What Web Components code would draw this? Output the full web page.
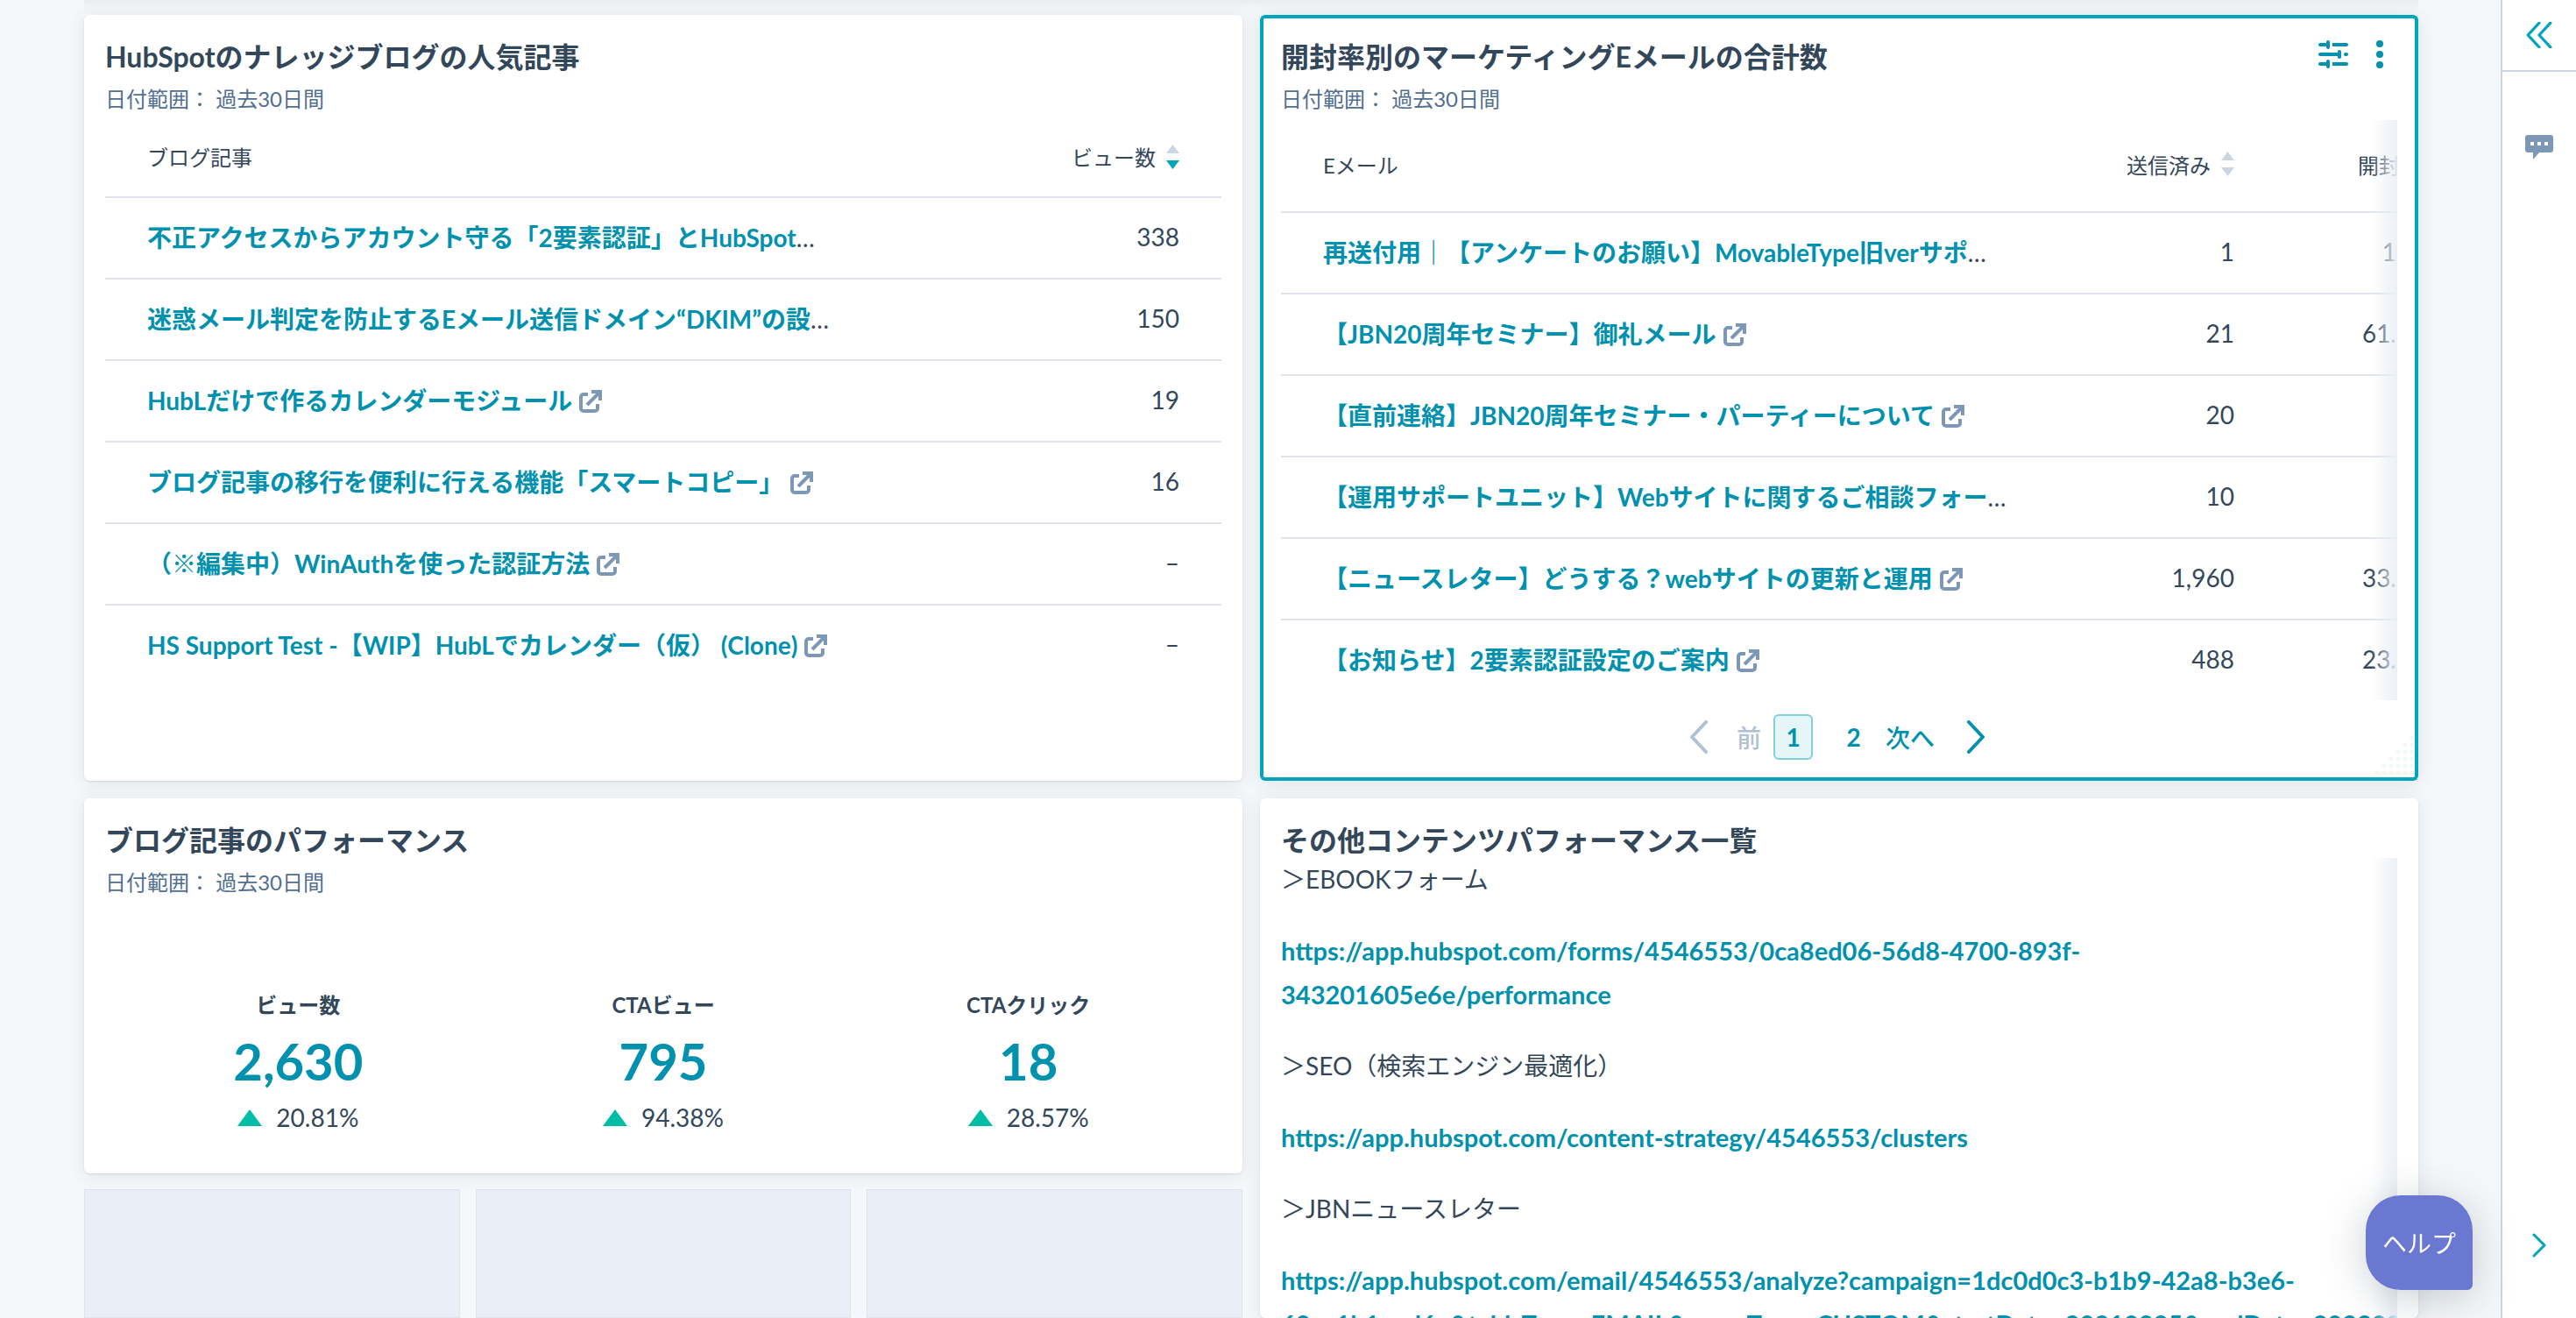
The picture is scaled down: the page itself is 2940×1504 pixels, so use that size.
<!DOCTYPE html>
<html lang="ja">
<head>
<meta charset="utf-8">
<title>ダッシュボード</title>
<style>
    html, body {
        height: 100%;
    }
    body {
        margin: 0;
        display: flex;
        overflow: hidden;
        background: #f5f8fa;
        color: #33475b;
        font-family: Lato, "Noto Sans CJK JP", sans-serif;
        font-size: 28px;
        text-spacing-trim: space-all;
    }
    report-board {
        flex: 1;
        min-width: 0;
    }
    .stack {
        display: flex;
        flex-direction: column;
        gap: 18px;
        min-width: 0;
    }
    .tiles {
        flex: 1;
        display: flex;
        gap: 18px;
    }
    .metrics {
        display: flex;
        margin: 108px 12px 24px;
    }
</style>
</head>
<body>
<report-board>
    <report-card heading="HubSpotのナレッジブログの人気記事" range="過去30日間">
        <report-table source="posts"></report-table>
    </report-card>
    <report-card heading="開封率別のマーケティングEメールの合計数" range="過去30日間" selected>
        <card-actions slot="actions"></card-actions>
        <fade-scroll><report-table source="emails" wide></report-table></fade-scroll>
        <page-nav></page-nav>
    </report-card>
    <div class="stack">
        <report-card heading="ブログ記事のパフォーマンス" range="過去30日間">
            <div class="metrics">
                <kpi-metric label="ビュー数" value="2,630" delta="20.81%"></kpi-metric>
                <kpi-metric label="CTAビュー" value="795" delta="94.38%"></kpi-metric>
                <kpi-metric label="CTAクリック" value="18" delta="28.57%"></kpi-metric>
            </div>
        </report-card>
        <div class="tiles">
            <empty-tile></empty-tile>
            <empty-tile></empty-tile>
            <empty-tile></empty-tile>
        </div>
    </div>
    <report-card heading="その他コンテンツパフォーマンス一覧">
        <fade-scroll><link-notes></link-notes></fade-scroll>
    </report-card>
</report-board>
<side-rail></side-rail>
<help-button>ヘルプ</help-button>

<script>
const tables = {
    posts: {
        columns: [{ name: 'ブログ記事' }, { name: 'ビュー数', sort: 'desc' }],
        rows: [
            ['不正アクセスからアカウント守る「2要素認証」とHubSpot', '338', true],
            ['迷惑メール判定を防止するEメール送信ドメイン“DKIM”の設', '150', true],
            ['HubLだけで作るカレンダーモジュール', '19'],
            ['ブログ記事の移行を便利に行える機能「スマートコピー」', '16'],
            ['（※編集中）WinAuthを使った認証方法', '–'],
            ['HS Support Test -【WIP】HubLでカレンダー（仮） (Clone)', '–']
        ]
    },
    emails: {
        columns: [{ name: 'Eメール' }, { name: '送信済み', sort: 'none' }, { name: '開封率', sort: 'none' }],
        rows: [
            ['再送付用｜【アンケートのお願い】MovableType旧verサポ', '1', true, '100%'],
            ['【JBN20周年セミナー】御礼メール', '21', false, '61.90%'],
            ['【直前連絡】JBN20周年セミナー・パーティーについて', '20', false, ''],
            ['【運用サポートユニット】Webサイトに関するご相談フォー', '10', true, ''],
            ['【ニュースレター】どうする？webサイトの更新と運用', '1,960', false, '33.42%'],
            ['【お知らせ】2要素認証設定のご案内', '488', false, '23.77%']
        ]
    }
}

class ReportBoard extends HTMLElement {
    constructor() {
        super()
        const shadow = this.attachShadow({ mode: 'open' })
        shadow.innerHTML = `
        <style>
        :host {
            display:block;
            box-sizing:border-box;
            height:100vh;
            padding:0 94px 0 96px;
        }
        main {
            box-sizing:border-box;
            height:100%;
            padding-top:17px;
            display:grid;
            grid-template-columns:minmax(0, 1fr) minmax(0, 1fr);
            grid-template-rows:auto minmax(0, 1fr);
            gap:20px;
            background:linear-gradient(#e9edf0, #f2f5f8 8px, transparent 17px);
        }
        </style>
        <main><slot></slot></main>
        `
    }
}

class ReportCard extends HTMLElement {
    constructor() {
        super()
        const range = this.getAttribute('range')
        const shadow = this.attachShadow({ mode: 'open' })
        shadow.innerHTML = `
        <style>
        :host {
            display:block;
            position:relative;
            box-sizing:border-box;
            min-width:0;
            padding:28px 24px 24px;
            background:#fff;
            border-radius:6px;
            box-shadow:0 1px 2px rgba(45, 62, 80, .12), 0 2px 20px rgba(45, 62, 80, .1);
        }
        :host([selected]) {
            box-shadow:inset 0 0 0 4px #00a4bd, 0 2px 20px rgba(45, 62, 80, .12);
        }
        header {
            display:flex;
            justify-content:space-between;
            align-items:flex-start;
        }
        h2 {
            margin:0;
            font-size:32px;
            line-height:40px;
            font-weight:700;
        }
        p {
            margin:12px 0 8px;
            font-size:24px;
            line-height:32px;
            color:#516f90;
        }
        .grip {
            display:none;
            position:absolute;
            right:5px;
            bottom:7px;
        }
        :host([selected]) .grip {
            display:block;
        }
        </style>
        <header>
            <h2>${this.getAttribute('heading')}</h2>
            <slot name="actions"></slot>
        </header>
        ${range ? `<p>日付範囲： ${range}</p>` : ''}
        <slot></slot>
        <svg class="grip" width="44" height="44" fill="#f1f8f9">${grip()}</svg>
        `
    }
}

// triangle of small squares in the resize corner
function grip() {
    let dots = ''
    for (let row = 0; row < 6; row++) {
        for (let col = 5 - row; col < 6; col++) {
            dots += `<rect x="${col * 8}" y="${row * 8}" width="4" height="4"/>`
        }
    }
    return dots
}

class CardActions extends HTMLElement {
    constructor() {
        super()
        const shadow = this.attachShadow({ mode: 'open' })
        shadow.innerHTML = `
        <style>
        :host {
            display:flex;
            gap:24px;
            padding-right:8px;
        }
        button {
            height:34px;
            padding:0;
            border:none;
            background:none;
            color:#0091ae;
        }
        button.filter {
            width:34px;
        }
        button.more {
            width:24px;
        }
        svg {
            display:block;
            margin:0 auto;
        }
        </style>
        <button class="filter" aria-label="フィルター">
            <svg width="34" height="34" viewBox="0 0 34 34" fill="none" stroke="currentColor" stroke-width="4" stroke-linecap="round">
                <path d="M2 6h8M19 6h13M2 17h20M31 17h1M2 28h8M19 28h13"/>
                <path d="M11 3v6M24 14v6M11 25v6"/>
                <path stroke-linecap="butt" d="M16 6h3M16 28h3"/>
            </svg>
        </button>
        <button class="more" aria-label="その他の操作">
            <svg width="8" height="34" viewBox="0 0 8 34" fill="currentColor">
                <circle cx="4" cy="5" r="4"/><circle cx="4" cy="17" r="4"/><circle cx="4" cy="29" r="4"/>
            </svg>
        </button>
        `
    }
}

class ReportTable extends HTMLElement {
    constructor() {
        super()
        const data = tables[this.getAttribute('source')]
        const shadow = this.attachShadow({ mode: 'open' })
        shadow.innerHTML = `
        <style>
        :host {
            display:block;
        }
        :host([wide]) {
            width:108%;
        }
        table {
            width:100%;
            table-layout:fixed;
            border-collapse:separate;
            border-spacing:0;
        }
        th, td {
            box-sizing:border-box;
            height:93px;
            padding:0 48px 4px;
            border-bottom:2px solid #dfe3eb;
            text-align:right;
            font-weight:400;
            white-space:nowrap;
        }
        tr:last-child td {
            height:91px;
            border-bottom:none;
        }
        th, thead tr:last-child th {
            width:240px;
            height:89px;
            font-size:24px;
        }
        :host([wide]) thead tr:last-child th {
            height:106px;
        }
        th:first-child, td:first-child, thead tr:last-child th:first-child {
            width:auto;
            padding-right:0;
            text-align:left;
        }
        button {
            display:inline-flex;
            align-items:center;
            gap:12px;
            padding:0;
            border:none;
            background:none;
            font:inherit;
            color:inherit;
        }
        a {
            color:#0091ae;
            font-weight:700;
            text-decoration:none;
        }
        .out {
            margin-left:8px;
            vertical-align:-3px;
        }
        </style>
        <table>
        <thead><tr>${data.columns.map(c => `<th scope="col">${this.head(c)}</th>`).join('')}</tr></thead>
        <tbody>${data.rows.map(r => this.row(r)).join('')}</tbody>
        </table>
        `
    }

    head(column) {
        if (!column.sort) return column.name
        return `<button>${column.name}<svg width="15" height="28" fill="#cbd6e2">
            <path d="M7.500 0 15 10H0z"/>
            <path d="M0 18h15L7.500 28z" ${column.sort === 'desc' ? 'fill="#00a4bd"' : ''}/>
        </svg></button>`
    }

    row([name, count, cut, rate]) {
        const tail = cut ? '…' : `<svg class="out" width="26" height="26" viewBox="0 0 26 26" fill="none" stroke="#7c98b6" stroke-width="4" stroke-linejoin="round">
            <path d="M10 5H5a3 3 0 0 0-3 3v13a3 3 0 0 0 3 3h13a3 3 0 0 0 3-3v-5"/>
            <path d="M9 17 23 3M14 2h10v10" stroke-linejoin="miter"/>
        </svg>`
        return `<tr><td><a href="#">${name}</a>${tail}</td><td>${count}</td>${rate === undefined ? '' : `<td>${rate}</td>`}</tr>`
    }
}

class FadeScroll extends HTMLElement {
    constructor() {
        super()
        const shadow = this.attachShadow({ mode: 'open' })
        shadow.innerHTML = `
        <style>
        :host {
            display:block;
            position:relative;
            overflow:hidden;
        }
        .fade {
            position:absolute;
            top:0;
            right:0;
            bottom:0;
            width:30px;
            background:linear-gradient(to right, rgba(255, 255, 255, 0), rgba(234, 240, 246, .95));
        }
        </style>
        <slot></slot>
        <div class="fade"></div>
        `
    }
}

class PageNav extends HTMLElement {
    constructor() {
        super()
        const shadow = this.attachShadow({ mode: 'open' })
        shadow.innerHTML = `
        <style>
        nav {
            display:flex;
            justify-content:center;
            align-items:center;
            gap:14px;
            margin-top:16px;
            padding-right:4px;
        }
        button {
            display:flex;
            align-items:center;
            justify-content:center;
            box-sizing:border-box;
            height:52px;
            padding:0;
            border:none;
            background:none;
            color:#0091ae;
            font:inherit;
            font-weight:700;
        }
        .step {
            gap:36px;
            font-weight:500;
        }
        .step:disabled {
            gap:32px;
            color:#b0c1d4;
        }
        .page {
            width:45px;
            border-radius:6px;
        }
        .page + .page {
            margin-left:10px;
        }
        .page[aria-current] {
            border:2px solid #7fd1de;
            background:#e5f5f8;
        }
        </style>
        <nav aria-label="ページ">
            <button class="step" disabled>
                <svg width="22" height="38" viewBox="0 0 22 38" fill="none" stroke="currentColor" stroke-width="4" stroke-linecap="round" stroke-linejoin="round"><path d="M19 2 3 19l16 17"/></svg>前
            </button>
            <button class="page" aria-current="page">1</button>
            <button class="page">2</button>
            <button class="step">次へ
                <svg width="22" height="38" viewBox="0 0 22 38" fill="none" stroke="currentColor" stroke-width="4" stroke-linecap="round" stroke-linejoin="round"><path d="m3 2 16 17L3 36"/></svg>
            </button>
        </nav>
        `
    }
}

class KpiMetric extends HTMLElement {
    constructor() {
        super()
        const shadow = this.attachShadow({ mode: 'open' })
        shadow.innerHTML = `
        <style>
        :host {
            flex:1;
            display:flex;
            flex-direction:column;
            align-items:center;
            gap:16px;
            line-height:32px;
        }
        h3 {
            margin:0;
            font-size:24px;
            font-weight:700;
        }
        a {
            color:#0091ae;
            font-size:58px;
            line-height:64px;
            font-weight:700;
            text-decoration:none;
        }
        div {
            display:flex;
            align-items:center;
            gap:16px;
        }
        </style>
        <h3>${this.getAttribute('label')}</h3>
        <a href="#">${this.getAttribute('value')}</a>
        <div>
            <svg width="28" height="19" fill="#00bda5"><path d="M14 0 28 19H0z"/></svg>
            <span>${this.getAttribute('delta')}</span>
        </div>
        `
    }
}

class EmptyTile extends HTMLElement {
    constructor() {
        super()
        const shadow = this.attachShadow({ mode: 'open' })
        shadow.innerHTML = `
        <style>
        :host {
            flex:1;
            border:1px solid #dfe3eb;
            background:#eaeef6;
        }
        </style>
        `
    }
}

class LinkNotes extends HTMLElement {
    constructor() {
        super()
        const shadow = this.attachShadow({ mode: 'open' })
        shadow.innerHTML = `
        <style>
        :host {
            display:block;
            line-height:49px;
        }
        p {
            margin:0 0 32px;
            white-space:nowrap;
        }
        a {
            color:#0091ae;
            font-size:29px;
            font-weight:700;
            text-decoration:none;
        }
        </style>
        <p>＞EBOOKフォーム</p>
        <p><a href="#">https://app.hubspot.com/forms/4546553/0ca8ed06-56d8-4700-893f-<br>343201605e6e/performance</a></p>
        <p>＞SEO（検索エンジン最適化）</p>
        <p><a href="#">https://app.hubspot.com/content-strategy/4546553/clusters</a></p>
        <p>＞JBNニュースレター</p>
        <p><a href="#">https://app.hubspot.com/email/4546553/analyze?campaign=1dc0d0c3-b1b9-42a8-b3e6-<br>69ca1b1eed6e&amp;tableType=EMAIL&amp;rangeType=CUSTOM&amp;startDate=20210825&amp;endDate=20220825</a></p>
        `
    }
}

class SideRail extends HTMLElement {
    constructor() {
        super()
        const shadow = this.attachShadow({ mode: 'open' })
        shadow.innerHTML = `
        <style>
        :host {
            display:flex;
            flex-direction:column;
            box-sizing:border-box;
            width:86px;
            height:100vh;
            border-left:2px solid #cbd6e2;
            background:#fff;
        }
        button {
            display:flex;
            align-items:center;
            justify-content:center;
            height:80px;
            padding:0;
            border:none;
            background:none;
            color:#00a4bd;
        }
        .collapse {
            box-sizing:content-box;
            border-bottom:2px solid #cbd6e2;
        }
        .chat {
            margin-top:46px;
        }
        .next {
            margin-top:auto;
            margin-bottom:43px;
        }
        </style>
        <button class="collapse" aria-label="展開">
            <svg width="30" height="30" viewBox="0 0 28 28" fill="none" stroke="currentColor" stroke-width="3" stroke-linecap="round" stroke-linejoin="round"><path d="M14 1 2 14l12 13M26 1 14 14l12 13"/></svg>
        </button>
        <button class="chat" aria-label="コメント">
            <svg width="32" height="28" viewBox="0 0 32 28" fill="#7c98b6">
                <path d="M3 0h26a3 3 0 0 1 3 3v14a3 3 0 0 1-3 3H16l-7 8v-8H3a3 3 0 0 1-3-3V3a3 3 0 0 1 3-3z"/>
                <path fill="#fff" d="M6 8h4v4H6zM14 8h4v4h-4zM22 8h4v4h-4z"/>
            </svg>
        </button>
        <button class="next" aria-label="次へ">
            <svg width="16" height="28" viewBox="0 0 16 28" fill="none" stroke="currentColor" stroke-width="3" stroke-linecap="round" stroke-linejoin="round"><path d="m2 2 12 12L2 26"/></svg>
        </button>
        `
    }
}

class HelpButton extends HTMLElement {
    constructor() {
        super()
        const shadow = this.attachShadow({ mode: 'open' })
        shadow.innerHTML = `
        <style>
        :host {
            position:fixed;
            right:118px;
            bottom:32px;
        }
        button {
            width:122px;
            height:108px;
            padding:0;
            border:none;
            border-radius:40px 40px 6px 40px;
            background:#6a78d1;
            color:#fff;
            font:inherit;
            box-shadow:0 8px 48px rgba(45, 62, 80, .25);
        }
        </style>
        <button><slot></slot></button>
        `
    }
}

customElements.define('report-board', ReportBoard)
customElements.define('report-card', ReportCard)
customElements.define('card-actions', CardActions)
customElements.define('report-table', ReportTable)
customElements.define('fade-scroll', FadeScroll)
customElements.define('page-nav', PageNav)
customElements.define('kpi-metric', KpiMetric)
customElements.define('empty-tile', EmptyTile)
customElements.define('link-notes', LinkNotes)
customElements.define('side-rail', SideRail)
customElements.define('help-button', HelpButton)
</script>
</body>
</html>
